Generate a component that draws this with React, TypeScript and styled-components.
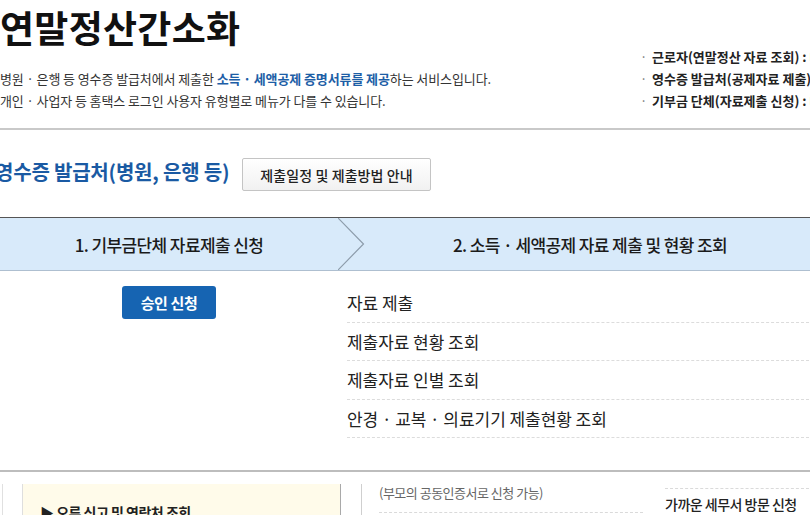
import styled, { createGlobalStyle } from 'styled-components'

const GlobalStyle = createGlobalStyle`
  html, body { margin: 0; padding: 0; background: #fff; }
  body {
    font-family: "Noto Sans CJK KR", "Noto Sans", sans-serif;
    color: #222;
  }
`

const Page = styled.div`
  width: 810px;
  height: 515px;
  overflow: hidden;
`

const Inner = styled.div`
  width: 814px;
`

const Header = styled.header`
  display: flex;
  align-items: flex-end;
  padding: 4px 0 16px;
  border-bottom: 2px solid #c9c9c9;
`

const Intro = styled.div`
  width: 640px;
  flex-shrink: 0;
`

const Title = styled.h1`
  margin: 0;
  font-size: 37px;
  line-height: 46px;
  font-weight: 700;
  letter-spacing: 0.3px;
  color: #111;
`

const Desc = styled.p`
  margin: 18px 0 0;
  font-size: 13px;
  line-height: 22px;
  letter-spacing: -0.1px;
  color: #333;
  white-space: nowrap;
`

const Strong = styled.span`
  color: #1d5ea6;
  font-weight: 700;
`

const UserList = styled.ul`
  margin: 0;
  padding: 0;
  list-style: none;
  white-space: nowrap;
`

const UserItem = styled.li`
  font-size: 13px;
  line-height: 22px;
  font-weight: 700;
  letter-spacing: 0;
  color: #222;
  &::before {
    content: "·";
    display: inline-block;
    width: 12px;
    font-weight: 400;
    color: #777;
  }
`

const SectionRow = styled.div`
  display: flex;
  align-items: center;
  gap: 13px;
  padding: 28px 0 26px;
`

const SectionTitle = styled.h2`
  margin: 0 0 6px -5px;
  font-size: 20px;
  line-height: 26px;
  font-weight: 700;
  letter-spacing: -0.2px;
  color: #1a5aa3;
`

const GuideButton = styled.button`
  height: 33px;
  padding: 0 17px;
  border: 1px solid #c4c4c4;
  border-radius: 2px;
  background: linear-gradient(#ffffff, #f1f1f1);
  font-family: inherit;
  font-size: 14px;
  font-weight: 500;
  letter-spacing: 0.1px;
  color: #222;
`

const TabBar = styled.div`
  display: flex;
  height: 52px;
  border-top: 1px solid #555;
  border-bottom: 1px solid #aebfd0;
  background: #d8eafa;
`

const Tab = styled.div<{ width?: number }>`
  ${p => (p.width ? `width: ${p.width}px;` : 'flex: 1;')}
  display: flex;
  align-items: center;
  justify-content: center;
  font-size: 17px;
  font-weight: 500;
  letter-spacing: -0.6px;
  color: #1b1b1b;
`

const Chevron = styled.svg`
  width: 28px;
  height: 52px;
  flex-shrink: 0;
`

const Steps = styled.div`
  display: flex;
`

const ApplyCol = styled.div`
  width: 338px;
  display: flex;
  justify-content: center;
  padding-top: 15px;
`

const ApplyButton = styled.button`
  width: 94px;
  height: 33px;
  border: 0;
  border-radius: 3px;
  background: #1664b2;
  color: #fff;
  font-family: inherit;
  font-size: 15px;
  font-weight: 700;
  letter-spacing: -0.4px;
`

const MenuList = styled.ul`
  flex: 1;
  margin: 0 0 0 9px;
  padding: 13px 0 0;
  list-style: none;
`

const MenuItem = styled.li`
  height: 37.5px;
  line-height: 37.5px;
  border-bottom: 1px dashed #dcdcdc;
  font-size: 17px;
  letter-spacing: -0.05px;
  color: #222;
`

const Bottom = styled.div`
  display: flex;
  align-items: flex-start;
  margin-top: 32px;
  border-top: 2px solid #bdbdbd;
  padding-top: 12px;
  height: 60px;
`

const Stub = styled.div`
  width: 19px;
  height: 40px;
  margin: 0 0 0 2px;
  border-left: 1px solid #e0e0e0;
`

const Notice = styled.div`
  width: 319px;
  height: 40px;
  padding: 18px 0 0 17px;
  box-sizing: border-box;
  background: #fffbea;
  border-left: 1px solid #dedede;
  border-right: 1px solid #a9a9a9;
  font-size: 14px;
  line-height: 20px;
  font-weight: 700;
  letter-spacing: -0.5px;
  color: #222;
`

const NoteCol = styled.div`
  margin-left: 20px;
  border-left: 1px solid #cfcfcf;
  padding-left: 17px;
  height: 40px;
`

const Note = styled.div`
  width: 264px;
  line-height: 18px;
  padding-bottom: 10px;
  border-bottom: 1px dashed #dadada;
  font-size: 13px;
  letter-spacing: -0.5px;
  color: #666;
`

const VisitCol = styled.div`
  margin: 4px 0 0 22px;
  flex: 1;
  border-top: 1px dashed #dadada;
  font-size: 14px;
  line-height: 30px;
  font-weight: 500;
  letter-spacing: -0.5px;
  color: #222;
`

const menus = [
  '자료 제출',
  '제출자료 현황 조회',
  '제출자료 인별 조회',
  '안경 · 교복 · 의료기기 제출현황 조회',
]

const users = [
  '근로자(연말정산 자료 조회) : 메뉴',
  '영수증 발급처(공제자료 제출) : 메뉴',
  '기부금 단체(자료제출 신청) : 메뉴',
]

export default function App() {
  return (
    <Page>
      <GlobalStyle />
      <Inner>
        <Header>
          <Intro>
            <Title>연말정산간소화</Title>
            <Desc>
              병원 · 은행 등 영수증 발급처에서 제출한 <Strong>소득 · 세액공제 증명서류를 제공</Strong>하는 서비스입니다.
              <br />
              개인 · 사업자 등 홈택스 로그인 사용자 유형별로 메뉴가 다를 수 있습니다.
            </Desc>
          </Intro>
          <UserList>
            {users.map(u => (
              <UserItem key={u}>{u}</UserItem>
            ))}
          </UserList>
        </Header>

        <SectionRow>
          <SectionTitle>영수증 발급처(병원, 은행 등)</SectionTitle>
          <GuideButton>제출일정 및 제출방법 안내</GuideButton>
        </SectionRow>

        <TabBar>
          <Tab width={338}>1. 기부금단체 자료제출 신청</Tab>
          <Chevron viewBox="0 0 28 52">
            <polyline points="0,0 25.5,26 0,52" fill="none" stroke="#8d9cab" strokeWidth="1.2" />
          </Chevron>
          <Tab>2. 소득 · 세액공제 자료 제출 및 현황 조회</Tab>
        </TabBar>

        <Steps>
          <ApplyCol>
            <ApplyButton>승인 신청</ApplyButton>
          </ApplyCol>
          <MenuList>
            {menus.map(m => (
              <MenuItem key={m}>{m}</MenuItem>
            ))}
          </MenuList>
        </Steps>

        <Bottom>
          <Stub />
          <Notice>▶ 오류 신고 및 연락처 조회</Notice>
          <NoteCol>
            <Note>(부모의 공동인증서로 신청 가능)</Note>
          </NoteCol>
          <VisitCol>가까운 세무서 방문 신청</VisitCol>
        </Bottom>
      </Inner>
    </Page>
  )
}
